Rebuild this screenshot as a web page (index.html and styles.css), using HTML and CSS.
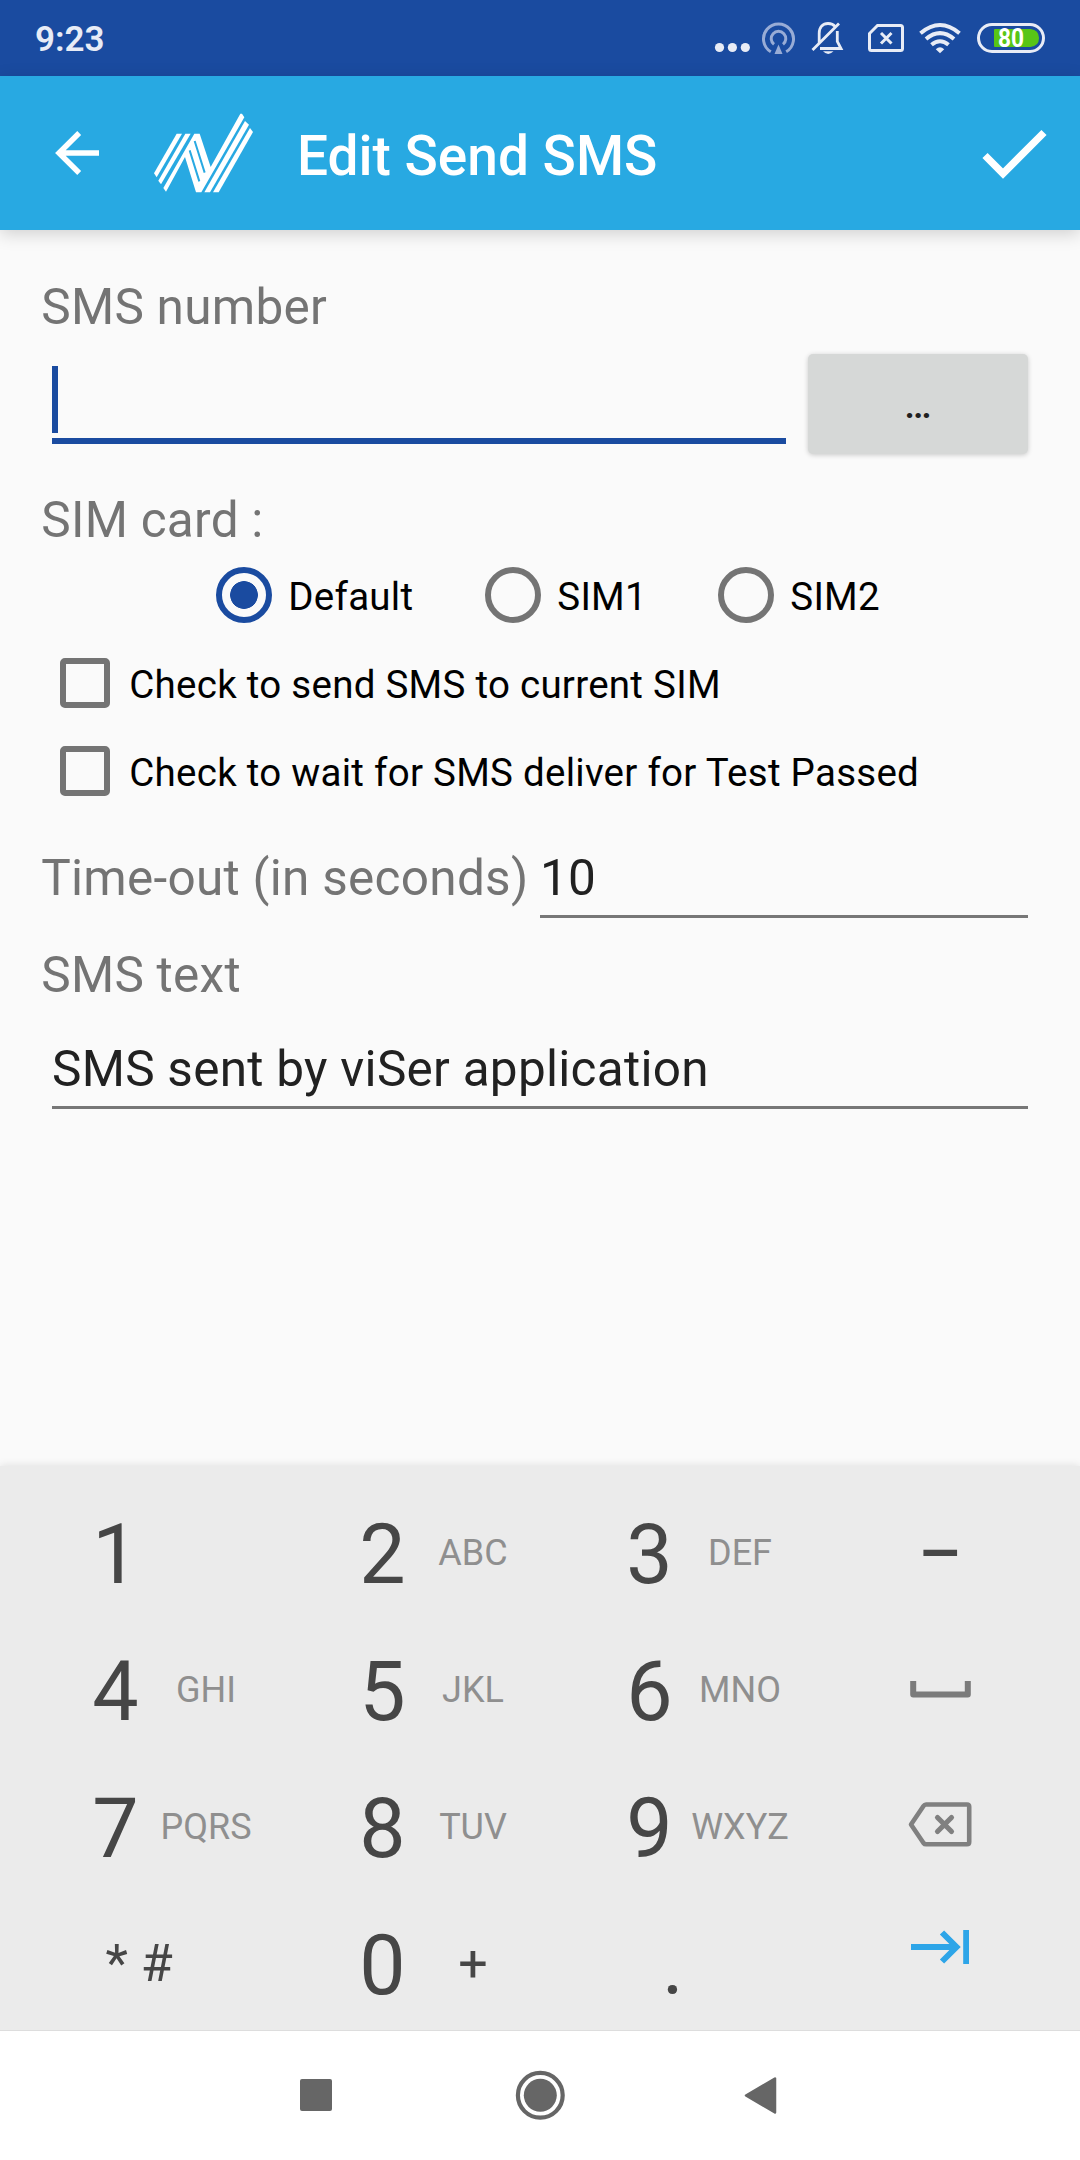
FILE: index.html
```html
<!DOCTYPE html>
<html lang="en">
<head>
<meta charset="utf-8">
<title>Edit Send SMS</title>
<link rel="stylesheet" href="styles.css">
</head>
<body>
<div class="screen">
  <header class="status">
    <span class="clock">9:23</span>
    <svg class="status-icons" width="340" height="40" viewBox="710 18 340 40" fill="none" stroke="#e8ecf6" stroke-width="3">
      <g fill="#e8ecf6" stroke="none"><circle cx="719.5" cy="47.5" r="4.6"/><circle cx="732.4" cy="47.5" r="4.6"/><circle cx="745.3" cy="47.5" r="4.6"/></g>
      <g stroke="#98acd6"><path d="M770.8 51.800A15 15 0 1 1 786.200 51.800"/><path d="M774 44.400A7.300 7.300 0 1 1 783 44.400"/><path d="M778.500 44.500L782.500 54H774.500z" fill="#98acd6" stroke="none"/></g>
      <path d="M819.200 43.500V33.500C819.200 27 823 23.500 828 23.500C831 23.500 833.500 24.500 835 26.500M837.300 31V41.500L841 48.500H820M812.500 50L839 23.500" stroke-width="2.800"/>
      <path d="M823 51.200H833.500Q828.200 56.600 823 51.200z" fill="#e8ecf6" stroke="none"/>
      <path d="M877.500 25.500H900.500Q902.500 25.500 902.500 27.500V48.500Q902.500 50.500 900.500 50.500H871.500Q869.500 50.500 869.500 48.500V33.500z"/>
      <path d="M881 33L891.500 43.500M891.500 33L881 43.500"/>
      <g stroke-width="4"><path d="M920.500 33.200Q940 16.800 959.500 33.200"/><path d="M926 39Q940 27.200 954 39"/><path d="M931.500 44.800Q940 37.600 948.500 44.800"/></g>
      <path d="M935.800 49.200Q940 45.200 944.200 49.200L940 53.200z" fill="#e8ecf6" stroke="none"/>
      <rect x="978.500" y="24.500" width="65" height="27" rx="13.500"/>
      <path d="M995 29H1030.500Q1039 30 1039 38T1030.500 47H995Q994 47 994 46V30Q994 29 995 29z" fill="#58c516" stroke="none"/>
      <text x="998" y="47" class="battery" textLength="26" lengthAdjust="spacingAndGlyphs">80</text>
    </svg>
  </header>

  <div class="appbar">
    <svg class="back" width="44" height="44" viewBox="0 0 44 44" fill="none" stroke="#fff" stroke-width="5.500"><path d="M44 22H4M24.200 2L4 22L24.200 42"/></svg>
    <svg class="logo" width="100" height="80" viewBox="462 338 300 240" fill="#fff">
      <path d="M462 519L530 400H546L470 531z"/>
      <path d="M475 541L556 400H572L483 552z"/>
      <path d="M490 563L583 400H599L632 500L721 340H726L733 351L604 576H588L555 470L498 574z"/>
      <path d="M735 362L747 373L630 576H613z"/>
      <path d="M750 383L759 395L656 576H639z"/>
      <path d="M584 422L614 517M569 450L598 543" stroke="#28a9e2" stroke-width="6" fill="none"/>
    </svg>
    <h1 class="title">Edit Send SMS</h1>
    <svg class="done" width="66" height="50" viewBox="0 0 66 50" fill="none" stroke="#fff" stroke-width="7.300"><path d="M3 26.500L21 44.500L62 3.500"/></svg>
  </div>

  <main class="form">
    <div class="label">SMS number</div>
    <div class="number-row">
      <div class="number-input"><span class="caret"></span></div>
      <button class="browse">…</button>
    </div>
    <div class="label sim-label">SIM card :</div>
    <div class="radios">
      <div class="radio selected"><span class="ring"></span><span class="opt">Default</span></div>
      <div class="radio"><span class="ring"></span><span class="opt">SIM1</span></div>
      <div class="radio"><span class="ring"></span><span class="opt">SIM2</span></div>
    </div>
    <div class="check"><span class="box"></span><span>Check to send SMS to current SIM</span></div>
    <div class="check"><span class="box"></span><span>Check to wait for SMS deliver for Test Passed</span></div>
    <div class="timeout">
      <div class="label">Time-out (in seconds)</div>
      <div class="field">10</div>
    </div>
    <div class="label text-label">SMS text</div>
    <div class="field message">SMS sent by viSer application</div>
  </main>

  <section class="keyboard">
    <div class="key"><span class="digit">1</span></div>
    <div class="key"><span class="digit">2</span><span class="letters">ABC</span></div>
    <div class="key"><span class="digit">3</span><span class="letters">DEF</span></div>
    <div class="key side"><span class="minus">−</span></div>
    <div class="key"><span class="digit">4</span><span class="letters">GHI</span></div>
    <div class="key"><span class="digit">5</span><span class="letters">JKL</span></div>
    <div class="key"><span class="digit">6</span><span class="letters">MNO</span></div>
    <div class="key side"><svg class="space" width="61" height="17" viewBox="0 0 61 17" fill="none" stroke="#7b7b7b" stroke-width="6" stroke-linejoin="round"><path d="M3.200 0V13.500H57.800V0"/></svg></div>
    <div class="key"><span class="digit">7</span><span class="letters">PQRS</span></div>
    <div class="key"><span class="digit">8</span><span class="letters">TUV</span></div>
    <div class="key"><span class="digit">9</span><span class="letters">WXYZ</span></div>
    <div class="key side"><svg class="erase" width="64" height="45" viewBox="0 0 64 45" fill="none" stroke="#808080" stroke-width="4.600" stroke-linejoin="round"><path d="M18 2.500H59Q61.200 2.500 61.200 4.700V40Q61.200 42.300 59 42.300H18Q16.500 42.300 15.500 41L3 22.500L15.500 4Q16.500 2.500 18 2.500z"/><path d="M29.500 15.500L43.500 29.500M43.500 15.500L29.500 29.500" stroke-width="5.200" stroke-linecap="round"/></svg></div>
    <div class="key symbols"><span class="symbol">* #</span></div>
    <div class="key"><span class="digit">0</span><span class="letters plus">+</span></div>
    <div class="key"><span class="digit dot">.</span></div>
    <div class="key side"><svg class="tab" width="58" height="34" viewBox="0 0 58 34" fill="none" stroke="#2da5e8" stroke-width="6"><path d="M0 17H46M31 2.500L45.500 17L31 31.500M55.200 0V34"/></svg></div>
  </section>

  <nav class="navbar">
    <svg width="480" height="50" viewBox="300 2070 480 50" fill="#666">
      <rect x="300" y="2079" width="32" height="32" rx="2"/>
      <circle cx="540.300" cy="2095.300" r="16.500"/>
      <circle cx="540.300" cy="2095.300" r="22.400" fill="none" stroke="#666" stroke-width="4.200"/>
      <path d="M746 2095.500L775 2078.500V2112.500z" stroke="#666" stroke-width="2.500" stroke-linejoin="round"/>
    </svg>
  </nav>
</div>
</body>
</html>
```
FILE: styles.css
```css
* { box-sizing: border-box; }
body {
  margin: 0;
  background: #fafafa;
  font-family: Roboto, sans-serif;
}
.screen {
  width: 1080px;
  height: 2160px;
  display: flex;
  flex-direction: column;
  overflow: hidden;
}

/* Status bar */
.status {
  height: 76px;
  flex: none;
  display: flex;
  justify-content: space-between;
  align-items: flex-start;
  padding: 18px 30px 0 35px;
  background: #1a4ba0;
}
.clock {
  font-size: 35px;
  line-height: 43px;
  font-weight: 600;
  color: #e8ecf6;
}
.battery {
  font-size: 25.500px;
  font-weight: 700;
  fill: #fff;
  stroke: none;
}

/* App bar */
.appbar {
  height: 154px;
  flex: none;
  display: flex;
  align-items: flex-start;
  padding: 0 32px 0 55px;
  background: #28a9e2;
  box-shadow: 0 4px 16px rgba(0, 0, 0, .17);
  position: relative;
}
.back { margin-top: 55px; }
.logo { margin: 37px 0 0 55px; }
.title {
  flex: 1;
  margin: 47px 0 0 43px;
  font-size: 55px;
  line-height: 66px;
  font-weight: 500;
  color: #fff;
}
.done { margin-top: 53px; }

/* Form */
.form {
  height: 1236px;
  flex: none;
  padding: 44px 52px 0 41.250px;
  letter-spacing: .27px;
}
.label {
  font-size: 49.500px;
  line-height: 66px;
  color: #747474;
  white-space: nowrap;
}
.number-row {
  display: flex;
  justify-content: space-between;
  height: 115px;
}
.number-input {
  width: 734px;
  height: 104px;
  margin-left: 10.750px;
  padding-top: 26px;
  border-bottom: 6px solid #1a4ba0;
}
.caret {
  display: block;
  width: 6px;
  height: 67px;
  background: #1a4ba0;
}
.browse {
  width: 220px;
  height: 100px;
  margin: 14px 0 0;
  padding: 0;
  border: 0;
  border-radius: 5px;
  background: #d6d8d7;
  box-shadow: 0 1px 5px rgba(0, 0, 0, .2);
  font: 500 38.500px/102px Roboto, sans-serif;
  color: #1f2020;
}
.sim-label { margin-top: 32px; }
.radios {
  display: grid;
  grid-template-columns: 269px 233px 1fr;
  height: 55px;
  margin: 14px 0 36px;
  padding-left: 175px;
}
.radio {
  display: flex;
  align-items: flex-start;
  gap: 16px;
}
.ring {
  width: 56px;
  height: 56px;
  border: 6px solid #747474;
  border-radius: 50%;
}
.selected .ring {
  border-color: #1a4ba0;
  background: radial-gradient(circle, #1a4ba0 13.500px, transparent 14.200px);
}
.opt {
  font-size: 38.500px;
  line-height: 60px;
  color: #000;
}
.check {
  display: flex;
  align-items: flex-start;
  gap: 19px;
  height: 88px;
  padding-left: 19px;
  font-size: 38.500px;
  line-height: 53px;
  color: #000;
}
.box {
  width: 50px;
  height: 50px;
  border: 6px solid #747474;
  border-radius: 5px;
}
.timeout {
  display: flex;
  justify-content: space-between;
  margin-top: 11px;
}
.field {
  width: 488px;
  height: 72.500px;
  border-bottom: 3px solid #777;
  font-size: 49.500px;
  line-height: 66px;
  color: #212121;
}
.text-label { margin-top: 24.500px; }
.message {
  width: 976px;
  margin: 28px 0 0 10.750px;
}

/* Keyboard */
.keyboard {
  height: 565px;
  flex: none;
  display: grid;
  grid-template-columns: 267px 267px 267px 1fr;
  grid-auto-rows: 126px;
  row-gap: 11px;
  padding-top: 26px;
  background: #ebebeb;
  border-bottom: 1px solid #ddd;
  box-shadow: 0 -1px 8px rgba(0, 0, 0, .1);
}
.key {
  display: flex;
  align-items: flex-start;
  padding-left: 71px;
}
.digit {
  width: 89px;
  text-align: center;
  font-size: 82.500px;
  line-height: 126px;
  color: #464646;
}
.letters {
  width: 92px;
  display: flex;
  justify-content: center;
  font-size: 36px;
  line-height: 122px;
  color: #8f8f8f;
}
.symbols { padding-left: 105.500px; }
.symbol, .plus {
  font-size: 52px;
  line-height: 121px;
  color: #464646;
}
.dot { width: 136px; }
.side {
  padding: 0 1px 0 0;
  justify-content: center;
}
.minus {
  font-size: 82.500px;
  line-height: 124px;
  color: #464646;
}
.space { margin-top: 52px; }
.erase { margin-top: 36px; }
.tab { margin-top: 27px; }

/* Navigation bar */
.navbar {
  flex: 1;
  display: flex;
  justify-content: center;
  padding-top: 39px;
  background: #fff;
}
```
